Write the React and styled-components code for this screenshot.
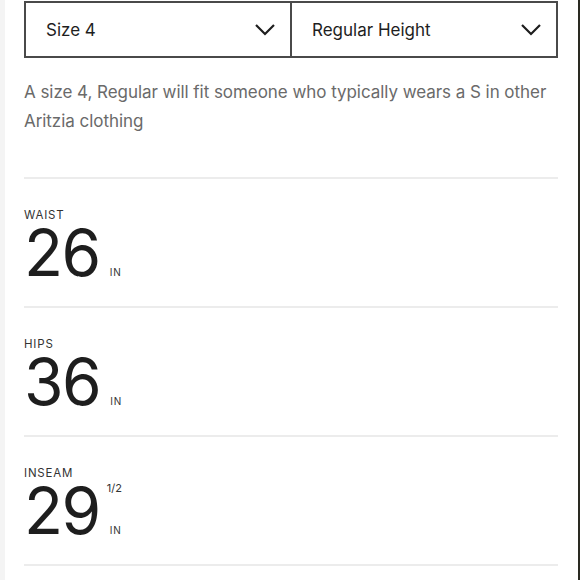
import styled, { createGlobalStyle } from "styled-components";

const GlobalStyle = createGlobalStyle`
  * { box-sizing: border-box; }
  html, body { margin: 0; padding: 0; background: #fff; }
  body { font-family: Inter, "Noto Sans", sans-serif; }
`;

const measurements = [
  { id: "waist", label: "Waist", value: "26" },
  { id: "hips", label: "Hips", value: "36" },
  { id: "inseam", label: "Inseam", value: "29", fraction: "1/2" },
];

const Chevron = () => (
  <svg width="22" height="14" viewBox="0 0 22 14" fill="none">
    <path d="M2 2l9 9 9-9" stroke="#1e1e1e" strokeWidth="2.2" />
  </svg>
);

const App = () => {
  return (
    <Frame>
      <GlobalStyle />
      <Panel>
        <Selects>
          <Select>
            <span>Size 4</span>
            <Chevron />
          </Select>
          <Select>
            <span>Regular Height</span>
            <Chevron />
          </Select>
        </Selects>

        <Description>
          A size 4, Regular will fit someone who typically wears a S in other
          Aritzia clothing
        </Description>

        {measurements.map(({ id, label, value, fraction }) => (
          <Measure key={id}>
            <Label>{label}</Label>
            <ValueRow>
              <Number>{value}</Number>
              <Units>
                <Fraction>{fraction}</Fraction>
                <Unit>in</Unit>
              </Units>
            </ValueRow>
          </Measure>
        ))}
      </Panel>
    </Frame>
  );
};

export default App;

const Frame = styled.div`
  width: 580px;
  height: 580px;
  overflow: hidden;
  display: flex;
  border-left: 5px solid #f4f4f4;
  border-right: 2px solid #2a2a22;
  background: #fff;
`;

const Panel = styled.div`
  width: 553px;
  padding: 1px 0 0 19px;
`;

const Selects = styled.div`
  display: flex;
  width: 534px;
  height: 57px;
  border: 2px solid #4a4a4a;
`;

const Select = styled.div`
  flex: 1;
  display: flex;
  align-items: center;
  justify-content: space-between;
  padding: 0 14px 0 20px;
  font-size: 17px;
  color: #1e1e1e;

  & + & {
    border-left: 2px solid #4a4a4a;
  }
`;

const Description = styled.p`
  margin: 20px 0 0;
  padding-bottom: 41px;
  width: 534px;
  font-size: 17px;
  line-height: 29px;
  color: #6a6a6a;
  letter-spacing: -0.05px;
`;

const Measure = styled.section`
  width: 534px;
  height: 129px;
  border-top: 2px solid #ececec;
  padding-top: 29px;

  &:last-of-type {
    height: 131px;
    border-bottom: 2px solid #ececec;
  }
`;

const Label = styled.div`
  font-size: 11.5px;
  letter-spacing: 0.8px;
  text-transform: uppercase;
  color: #333;
  line-height: 14px;
`;

const ValueRow = styled.div`
  display: flex;
  align-items: stretch;
  margin-top: 6px;
`;

const Number = styled.div`
  font-size: 64px;
  line-height: 50px;
  color: #1e1e1e;
  letter-spacing: -1.5px;
`;

const Units = styled.div`
  display: flex;
  flex-direction: column;
  justify-content: space-between;
  padding-left: 7px;
`;

const Fraction = styled.div`
  margin-top: -4px;
  font-size: 11px;
  color: #333;
  line-height: 12px;
`;

const Unit = styled.div`
  padding-left: 3px;
  font-size: 10px;
  letter-spacing: 0.8px;
  text-transform: uppercase;
  color: #333;
  line-height: 12px;
`;
